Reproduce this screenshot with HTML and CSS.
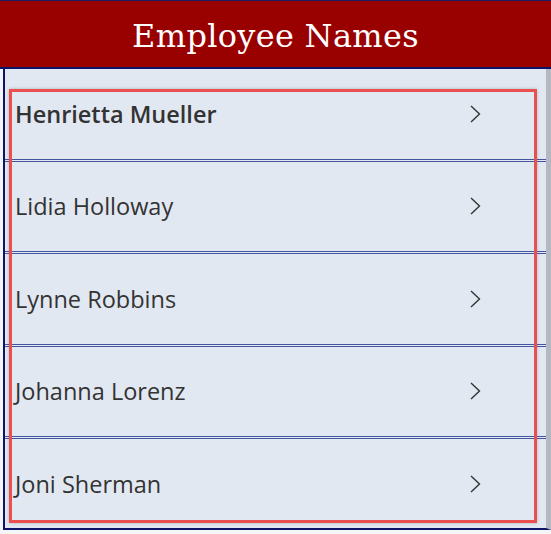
FILE: index.html
```html
<!DOCTYPE html>
<html>
  <head>
    <title>Employee Names</title>
    <link rel="stylesheet" href="styles.css">
  </head>
  <body>
    <div class="screen">
      <h1 class="title-bar">Employee Names</h1>
      <div class="gallery">
        <div class="row selected">
          <span class="name">Henrietta Mueller</span>
          <svg class="chevron" width="11" height="18" viewBox="0 0 11 18"><polyline points="1,1 9.5,9 1,17"/></svg>
        </div>
        <div class="row">
          <span class="name">Lidia Holloway</span>
          <svg class="chevron" width="11" height="18" viewBox="0 0 11 18"><polyline points="1,1 9.5,9 1,17"/></svg>
        </div>
        <div class="row">
          <span class="name">Lynne Robbins</span>
          <svg class="chevron" width="11" height="18" viewBox="0 0 11 18"><polyline points="1,1 9.5,9 1,17"/></svg>
        </div>
        <div class="row">
          <span class="name">Johanna Lorenz</span>
          <svg class="chevron" width="11" height="18" viewBox="0 0 11 18"><polyline points="1,1 9.5,9 1,17"/></svg>
        </div>
        <div class="row last">
          <span class="name">Joni Sherman</span>
          <svg class="chevron" width="11" height="18" viewBox="0 0 11 18"><polyline points="1,1 9.5,9 1,17"/></svg>
        </div>
        <!-- highlight box drawn over the list -->
        <div class="highlight"></div>
      </div>
    </div>
  </body>
</html>
```

FILE: styles.css
```css
/* Page and header */
body {
  margin: 0;
  background: #f3f5f9;
  font-family: "Open Sans", Arial, sans-serif;
}
.screen {
  width: 551px;
}
.title-bar {
  margin: 0;
  height: 66px;
  border-top: 1px solid #1a1f6b;
  border-bottom: 2px solid #0d1366;
  background-color: #990000;
  color: white;
  font-family: "DejaVu Serif", Georgia, serif;
  font-weight: normal;
  font-size: 32px;
  letter-spacing: 0.3px;
  line-height: 70px;
  text-align: center;
}

/* Gallery of names */
.gallery {
  position: relative;
  margin-left: 3px;
  background-color: #e2e8f2;
  border-left: 2px solid #0d1366;
  border-bottom: 2px solid #0d1366;
  border-right: 5px solid #b4b8c0;
}
.row {
  display: flex;
  align-items: center;
  justify-content: space-between;
  box-sizing: border-box;
  height: 92.5px;
  padding: 0 65px 0 10px;
  border-bottom: 3px double #4655a0;
}
.row.last {
  border-bottom: none;
  height: 89px;
}
.name {
  font-size: 23.5px;
  color: #333333;
}
.selected .name {
  font-weight: 600;
}
.chevron {
  fill: none;
  stroke: #333333;
  stroke-width: 1.4;
}
.highlight {
  position: absolute;
  left: 4px;
  top: 20px;
  width: 522px;
  height: 428px;
  border: 3px solid #e8514f;
  box-shadow: 0 0 3px rgba(80, 80, 80, 0.35);
}
```
